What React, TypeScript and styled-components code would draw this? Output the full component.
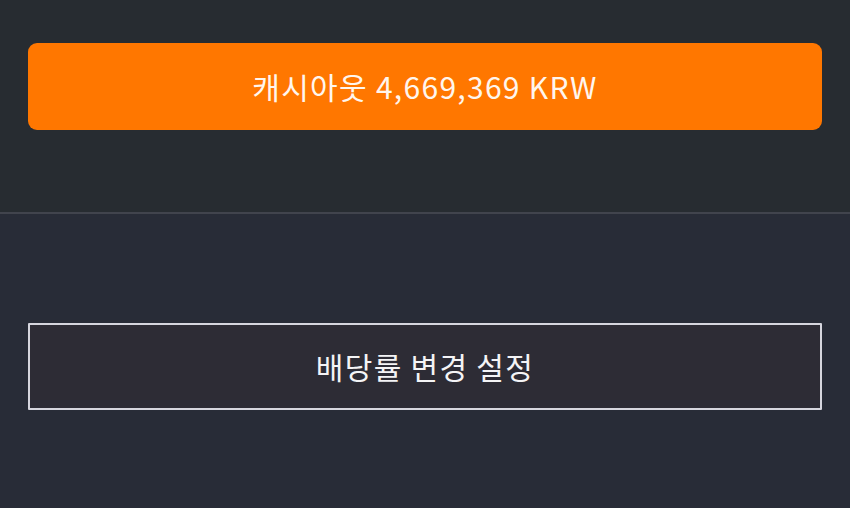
import React from 'react';
import styled, { createGlobalStyle } from 'styled-components';

const GlobalStyle = createGlobalStyle`
  html, body {
    margin: 0;
    padding: 0;
    background: #282c36;
  }
  body {
    font-family: 'Noto Sans CJK KR', 'Noto Sans', sans-serif;
  }
`;

function App() {
  return (
    <Page>
      <GlobalStyle />
      <TopSection>
        <CashoutButton type="button">캐시아웃 4,669,369 KRW</CashoutButton>
      </TopSection>
      <Divider />
      <BottomSection>
        <OutlineButton type="button">배당률 변경 설정</OutlineButton>
      </BottomSection>
    </Page>
  );
}

const Page = styled.div`
  width: 850px;
  height: 508px;
  display: flex;
  flex-direction: column;
  background: #282c36;
`;

const TopSection = styled.div`
  height: 212px;
  box-sizing: border-box;
  padding: 43px 28px 0;
  background: #272c31;
`;

const Divider = styled.div`
  height: 2px;
  background: #41444d;
`;

const BottomSection = styled.div`
  flex: 1;
  padding: 109px 28px 0;
  background: #282c37;
`;

const BaseButton = styled.button`
  appearance: none;
  width: 100%;
  height: 87px;
  display: flex;
  align-items: center;
  justify-content: center;
  padding: 0 0 2px;
  font-family: 'Noto Sans CJK KR', 'Noto Sans', sans-serif;
  font-size: 30px;
  font-weight: 400;
  letter-spacing: 1.3px;
  cursor: pointer;
  box-sizing: border-box;
`;

const CashoutButton = styled(BaseButton)`
  border: none;
  border-radius: 9px;
  background: #ff7700;
  color: #fff6ee;
`;

const OutlineButton = styled(BaseButton)`
  border: 2px solid #d6d6de;
  border-radius: 1px;
  background: #2d2c35;
  color: #f4f4f6;
`;

export default App;
